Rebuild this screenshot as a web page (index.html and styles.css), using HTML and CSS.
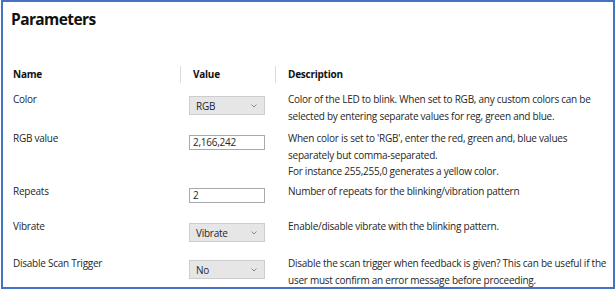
FILE: index.html
```html
<html>
    <head>
        <title>Parameters</title>
        <link rel="stylesheet" href="styles.css">
    </head>
    <body>
        <div class="frame">
            <h1 class="title">Parameters</h1>
            <div class="params">
                <div class="head">Name</div>
                <div class="head sep">Value</div>
                <div class="head sep">Description</div>

                <div class="name">Color</div>
                <div class="value">
                    <div class="select"><span>RGB</span>
                        <svg class="chev" width="6" height="4" viewBox="0 0 6 4"><path d="M0.5 0.5 L3 3 L5.5 0.5" fill="none" stroke="#8a8a8a" stroke-width="1"/></svg>
                    </div>
                </div>
                <div class="desc">Color of the LED to blink. When set to RGB, any custom colors can be selected by entering separate values for reg, green and blue.</div>

                <div class="name">RGB value</div>
                <div class="value"><div class="input">2,166,242</div></div>
                <div class="desc">When color is set to 'RGB', enter the red, green and, blue values separately but comma-separated.<br>For instance 255,255,0 generates a yellow color.</div>

                <div class="name">Repeats</div>
                <div class="value"><div class="input">2</div></div>
                <div class="desc">Number of repeats for the blinking/vibration pattern</div>

                <div class="name">Vibrate</div>
                <div class="value">
                    <div class="select"><span>Vibrate</span>
                        <svg class="chev" width="6" height="4" viewBox="0 0 6 4"><path d="M0.5 0.5 L3 3 L5.5 0.5" fill="none" stroke="#8a8a8a" stroke-width="1"/></svg>
                    </div>
                </div>
                <div class="desc">Enable/disable vibrate with the blinking pattern.</div>

                <div class="name">Disable Scan Trigger</div>
                <div class="value">
                    <div class="select"><span>No</span>
                        <svg class="chev" width="6" height="4" viewBox="0 0 6 4"><path d="M0.5 0.5 L3 3 L5.5 0.5" fill="none" stroke="#8a8a8a" stroke-width="1"/></svg>
                    </div>
                </div>
                <div class="desc">Disable the scan trigger when feedback is given? This can be useful if the user must confirm an error message before proceeding.</div>
            </div>
        </div>
    </body>
</html>
```

FILE: styles.css
```css
body{
    margin: 0px;
    background-color: white;
    font-family: "Open Sans", "Noto Sans", sans-serif;
    color: #262626;
}
div.frame{
    margin-left: 1px;
    width: 610px;
    height: 285px;
    border: 2px solid #4472c4;
    overflow: hidden;
}
h1.title{
    margin: 7px 0 0 8px;
    font-size: 15.5px;
    line-height: 20px;
    font-weight: bold;
    letter-spacing: -0.6px;
    color: #111;
}
div.params{
    margin-top: 37px;
    padding-left: 10px;
    display: grid;
    grid-template-columns: 167px 95px 1fr;
    grid-template-rows: 25px 39px 53px 35px 37px auto;
    font-size: 10px;
    line-height: 16.5px;
    letter-spacing: -0.25px;
}
div.head{
    font-weight: bold;
    color: #111;
    display: flex;
    align-items: center;
    margin-bottom: 8px;
}
div.head.sep{
    border-left: 1px solid #dcdcdc;
    padding-left: 12px;
}
div.value{
    padding-left: 9px;
    padding-top: 5px;
}
div.desc{
    padding-left: 13px;
}
div.select{
    box-sizing: border-box;
    width: 76px;
    height: 19px;
    background-color: #e6e6e6;
    border: 1px solid #cdcdcd;
    display: flex;
    justify-content: space-between;
    align-items: center;
    padding: 0 7px 0 6px;
    line-height: 16px;
}
svg.chev{
    display: block;
}
div.input{
    box-sizing: border-box;
    width: 76px;
    height: 15px;
    border: 1px solid #a9a9a9;
    padding-left: 3px;
    line-height: 13px;
}
```
